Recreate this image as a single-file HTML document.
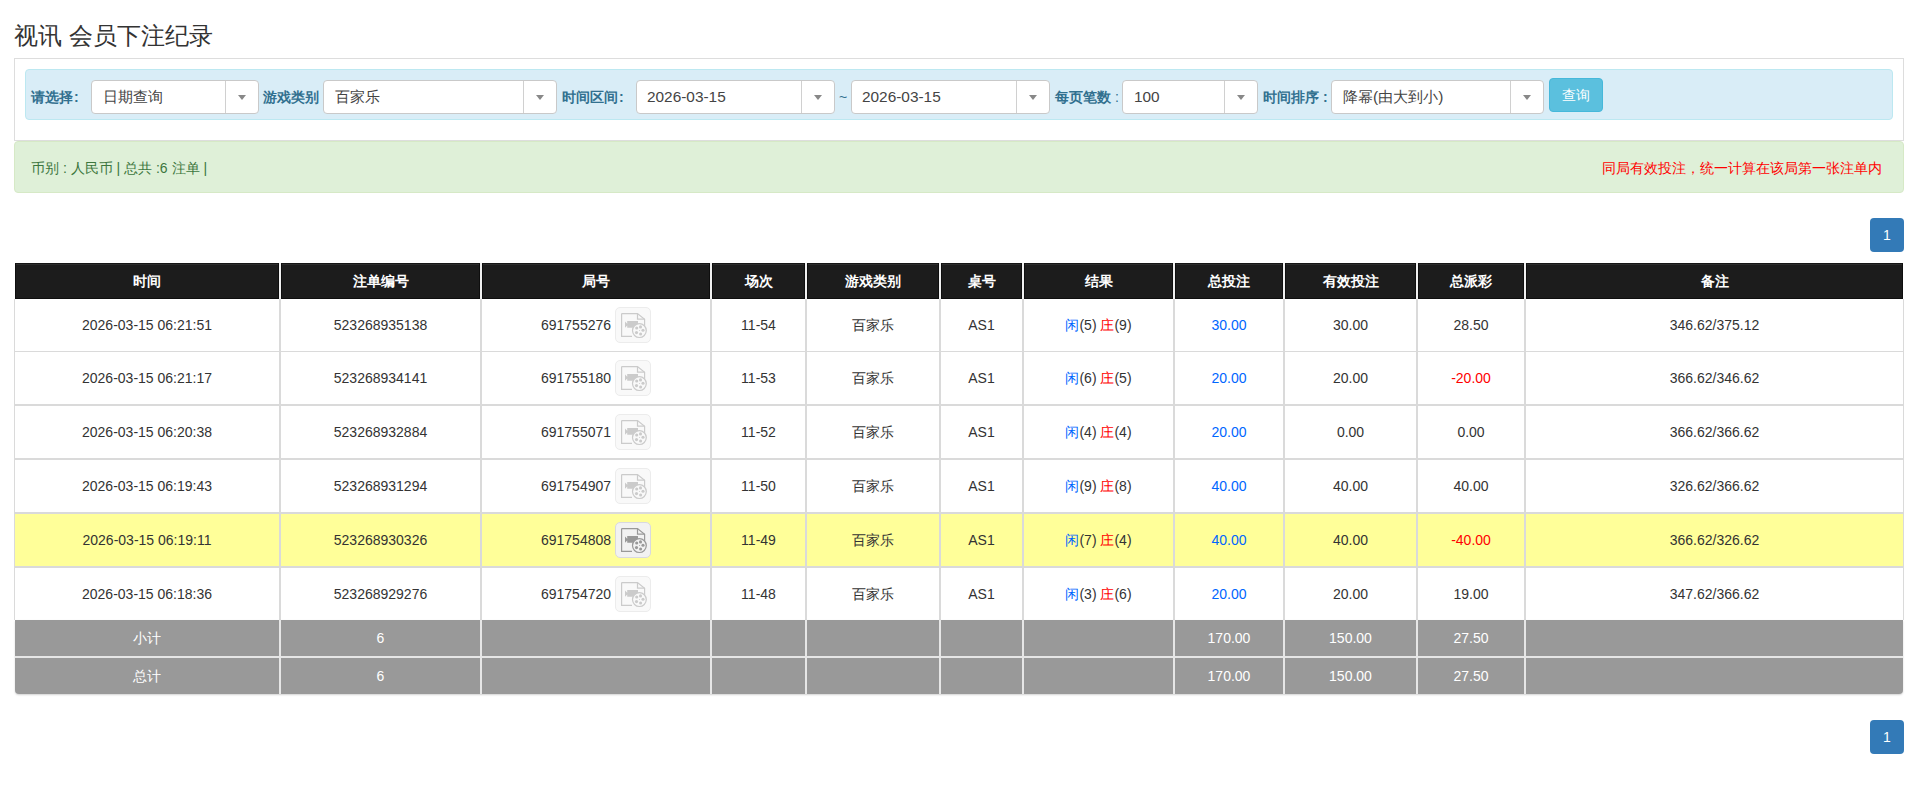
<!DOCTYPE html><html><head><meta charset="utf-8"><style>
*{box-sizing:border-box;margin:0;padding:0}
html,body{width:1917px;height:801px;overflow:hidden;background:#fff}
body{font-family:"Liberation Sans",sans-serif;color:#333;position:relative;font-size:14px}
.a{position:absolute}
.title{left:14px;top:21px;font-size:24px;line-height:30px;color:#333;white-space:nowrap}
.panel{left:14px;top:58px;width:1890px;height:83px;border:1px solid #ddd;background:#fff}
.info{left:25px;top:69px;width:1868px;height:51px;border:1px solid #bce8f1;background:#d9edf7;border-radius:4px}
.lbl{position:absolute;top:80px;height:34px;line-height:34px;font-weight:bold;color:#31708f;font-size:14px;white-space:nowrap}
.sel{position:absolute;top:80px;height:34px;border:1px solid #c9c9c9;border-radius:4px;background:#fff}
.st{position:absolute;top:0;line-height:32px;font-size:15.4px;color:#444;white-space:nowrap}
.dv{position:absolute;top:0;width:1px;height:32px;background:#d0d0d0}
.ar{position:absolute;top:14px;width:0;height:0;border-style:solid;border-width:5px 4px 0 4px;border-color:#888 transparent transparent transparent}
.btn{left:1549px;top:78px;width:54px;height:34px;background:#5bc0de;border:1px solid #46b8da;border-radius:4px;color:#fff;text-align:center;line-height:32px;font-size:14px}
.alert{left:14px;top:141px;width:1890px;height:52px;background:#dff0d8;border:1px solid #d6e9c6;border-radius:4px}
.at{position:absolute;top:142px;height:52px;line-height:52px;font-size:14px;white-space:nowrap}
.pg{left:1870px;width:34px;height:34px;background:#337ab7;border-radius:4px;color:#fff;text-align:center;line-height:34px;font-size:14px;font-weight:normal}
.th{position:absolute;top:263px;height:36px;background:#1c1c1c;border:1px solid #0e0e0e;border-top-color:#151515;color:#fff;font-weight:bold;text-align:center;line-height:34px;font-size:14px;box-shadow:inset 0 1px 0 #2c2c2c}
.td{position:absolute;text-align:center;font-size:14px;line-height:20px;color:#333;white-space:nowrap;display:flex;align-items:center;justify-content:center}
.hl{position:absolute;background:#dadada}
.vb{position:absolute;width:36px;height:36px;border:1px solid #ececec;border-radius:5px;background:#f9f9f9;margin-left:4px}
.vb.act{border-color:#d9d9e0;background:#f2f2f2}
.vb svg{position:absolute;left:-1px;top:-1px}
.ft{position:absolute;background:#999;color:#fff;text-align:center;font-size:14px;line-height:20px;display:flex;align-items:center;justify-content:center}
.b{color:#06f}.r{color:#f00}
</style></head><body>
<div class="a title">视讯 会员下注纪录</div>
<div class="a panel"></div><div class="a info"></div>
<div class="lbl" style="left:31px">请选择<span style="margin-left:1px">:</span></div>
<div class="sel" style="left:91px;width:168px"><span class="st" style="left:11px">日期查询</span><i class="dv" style="left:133px"></i><b class="ar" style="left:146px"></b></div>
<div class="lbl" style="left:263px">游戏类别</div>
<div class="sel" style="left:323px;width:234px"><span class="st" style="left:11px">百家乐</span><i class="dv" style="left:199px"></i><b class="ar" style="left:212px"></b></div>
<div class="lbl" style="left:562px">时间区间<span style="margin-left:1px">:</span></div>
<div class="sel" style="left:636px;width:199px"><span class="st" style="left:10px">2026-03-15</span><i class="dv" style="left:164px"></i><b class="ar" style="left:177px"></b></div>
<div class="lbl" style="left:839px;font-weight:normal">~</div>
<div class="sel" style="left:851px;width:199px"><span class="st" style="left:10px">2026-03-15</span><i class="dv" style="left:164px"></i><b class="ar" style="left:177px"></b></div>
<div class="lbl" style="left:1055px">每页笔数<span style="font-weight:normal"> :</span></div>
<div class="sel" style="left:1122px;width:136px"><span class="st" style="left:11px">100</span><i class="dv" style="left:101px"></i><b class="ar" style="left:114px"></b></div>
<div class="lbl" style="left:1263px">时间排序 :</div>
<div class="sel" style="left:1331px;width:213px"><span class="st" style="left:11px">降幂(由大到小)</span><i class="dv" style="left:178px"></i><b class="ar" style="left:191px"></b></div>
<div class="a btn">查询</div>
<div class="a alert"></div>
<div class="at" style="left:31px;color:#3c763d">币别 : 人民币 | 总共 :6 注单 |</div>
<div class="at" style="right:35px;color:#f00">同局有效投注，统一计算在该局第一张注单内</div>
<div class="a pg" style="top:218px">1</div>
<div class="a pg" style="top:720px">1</div>
<div class="a" style="left:15px;top:263px;width:1888px;height:36px;background:#f0f0f0"></div>
<div class="th" style="left:15px;width:264px">时间</div>
<div class="th" style="left:281px;width:199px">注单编号</div>
<div class="th" style="left:482px;width:228px">局号</div>
<div class="th" style="left:712px;width:93px">场次</div>
<div class="th" style="left:807px;width:132px">游戏类别</div>
<div class="th" style="left:941px;width:81px">桌号</div>
<div class="th" style="left:1024px;width:149px">结果</div>
<div class="th" style="left:1175px;width:108px">总投注</div>
<div class="th" style="left:1285px;width:131px">有效投注</div>
<div class="th" style="left:1418px;width:106px">总派彩</div>
<div class="th" style="left:1526px;width:377px">备注</div>
<div class="a" style="left:15px;top:514px;width:1888px;height:52px;background:#ffff99"></div>
<div class="hl" style="left:14px;top:299px;width:1px;height:321px"></div>
<div class="hl" style="left:1903px;top:299px;width:1px;height:321px"></div>
<div class="hl" style="left:14px;top:351px;width:1890px;height:1px"></div>
<div class="hl" style="left:14px;top:404px;width:1890px;height:2px"></div>
<div class="hl" style="left:14px;top:458px;width:1890px;height:2px"></div>
<div class="hl" style="left:14px;top:512px;width:1890px;height:2px"></div>
<div class="hl" style="left:14px;top:566px;width:1890px;height:2px"></div>
<div class="hl" style="left:279px;top:299px;width:2px;height:321px"></div>
<div class="hl" style="left:480px;top:299px;width:2px;height:321px"></div>
<div class="hl" style="left:710px;top:299px;width:2px;height:321px"></div>
<div class="hl" style="left:805px;top:299px;width:2px;height:321px"></div>
<div class="hl" style="left:939px;top:299px;width:2px;height:321px"></div>
<div class="hl" style="left:1022px;top:299px;width:2px;height:321px"></div>
<div class="hl" style="left:1173px;top:299px;width:2px;height:321px"></div>
<div class="hl" style="left:1283px;top:299px;width:2px;height:321px"></div>
<div class="hl" style="left:1416px;top:299px;width:2px;height:321px"></div>
<div class="hl" style="left:1524px;top:299px;width:2px;height:321px"></div>
<div class="td" style="left:15px;top:299px;width:264px;height:52px">2026-03-15 06:21:51</div>
<div class="td" style="left:281px;top:299px;width:199px;height:52px">523268935138</div>
<div class="td" style="left:482px;top:299px;width:228px;height:52px">691755276<span class="vb" style="position:relative;display:inline-block"><svg width="36" height="36" viewBox="0 0 36 36"><g fill="none" stroke="#cbcbcb" stroke-width="1.2"><path d="M6.6 6.6H22.5L29.6 12.2V22"/><path d="M6.6 6.6V29.4H17"/><path d="M22.5 6.6V12.2H29.6"/></g><path d="M10 14.5l2.2 2.3V14h10.8v6.8h-10.8v-2.4L10 20.7z" fill="#cbcbcb"/><circle cx="24.4" cy="23.6" r="6.9" fill="#f9f9f9" stroke="#cbcbcb" stroke-width="1.2"/><g fill="#cbcbcb"><circle cx="21.7" cy="21" r="1.55"/><circle cx="25.5" cy="19.9" r="1.55"/><circle cx="28" cy="23.3" r="1.55"/><circle cx="25.6" cy="27" r="1.55"/><circle cx="21.5" cy="25.6" r="1.55"/><circle cx="24.6" cy="23.4" r="0.5"/></g></svg></span></div>
<div class="td" style="left:712px;top:299px;width:93px;height:52px">11-54</div>
<div class="td" style="left:807px;top:299px;width:132px;height:52px">百家乐</div>
<div class="td" style="left:941px;top:299px;width:81px;height:52px">AS1</div>
<div class="td" style="left:1024px;top:299px;width:149px;height:52px"><span><span class="b">闲</span>(5) <span class="r">庄</span>(9)</span></div>
<div class="td" style="left:1175px;top:299px;width:108px;height:52px"><span class="b">30.00</span></div>
<div class="td" style="left:1285px;top:299px;width:131px;height:52px">30.00</div>
<div class="td" style="left:1418px;top:299px;width:106px;height:52px">28.50</div>
<div class="td" style="left:1526px;top:299px;width:377px;height:52px">346.62/375.12</div>
<div class="td" style="left:15px;top:352px;width:264px;height:52px">2026-03-15 06:21:17</div>
<div class="td" style="left:281px;top:352px;width:199px;height:52px">523268934141</div>
<div class="td" style="left:482px;top:352px;width:228px;height:52px">691755180<span class="vb" style="position:relative;display:inline-block"><svg width="36" height="36" viewBox="0 0 36 36"><g fill="none" stroke="#cbcbcb" stroke-width="1.2"><path d="M6.6 6.6H22.5L29.6 12.2V22"/><path d="M6.6 6.6V29.4H17"/><path d="M22.5 6.6V12.2H29.6"/></g><path d="M10 14.5l2.2 2.3V14h10.8v6.8h-10.8v-2.4L10 20.7z" fill="#cbcbcb"/><circle cx="24.4" cy="23.6" r="6.9" fill="#f9f9f9" stroke="#cbcbcb" stroke-width="1.2"/><g fill="#cbcbcb"><circle cx="21.7" cy="21" r="1.55"/><circle cx="25.5" cy="19.9" r="1.55"/><circle cx="28" cy="23.3" r="1.55"/><circle cx="25.6" cy="27" r="1.55"/><circle cx="21.5" cy="25.6" r="1.55"/><circle cx="24.6" cy="23.4" r="0.5"/></g></svg></span></div>
<div class="td" style="left:712px;top:352px;width:93px;height:52px">11-53</div>
<div class="td" style="left:807px;top:352px;width:132px;height:52px">百家乐</div>
<div class="td" style="left:941px;top:352px;width:81px;height:52px">AS1</div>
<div class="td" style="left:1024px;top:352px;width:149px;height:52px"><span><span class="b">闲</span>(6) <span class="r">庄</span>(5)</span></div>
<div class="td" style="left:1175px;top:352px;width:108px;height:52px"><span class="b">20.00</span></div>
<div class="td" style="left:1285px;top:352px;width:131px;height:52px">20.00</div>
<div class="td" style="left:1418px;top:352px;width:106px;height:52px"><span class="r">-20.00</span></div>
<div class="td" style="left:1526px;top:352px;width:377px;height:52px">366.62/346.62</div>
<div class="td" style="left:15px;top:406px;width:264px;height:52px">2026-03-15 06:20:38</div>
<div class="td" style="left:281px;top:406px;width:199px;height:52px">523268932884</div>
<div class="td" style="left:482px;top:406px;width:228px;height:52px">691755071<span class="vb" style="position:relative;display:inline-block"><svg width="36" height="36" viewBox="0 0 36 36"><g fill="none" stroke="#cbcbcb" stroke-width="1.2"><path d="M6.6 6.6H22.5L29.6 12.2V22"/><path d="M6.6 6.6V29.4H17"/><path d="M22.5 6.6V12.2H29.6"/></g><path d="M10 14.5l2.2 2.3V14h10.8v6.8h-10.8v-2.4L10 20.7z" fill="#cbcbcb"/><circle cx="24.4" cy="23.6" r="6.9" fill="#f9f9f9" stroke="#cbcbcb" stroke-width="1.2"/><g fill="#cbcbcb"><circle cx="21.7" cy="21" r="1.55"/><circle cx="25.5" cy="19.9" r="1.55"/><circle cx="28" cy="23.3" r="1.55"/><circle cx="25.6" cy="27" r="1.55"/><circle cx="21.5" cy="25.6" r="1.55"/><circle cx="24.6" cy="23.4" r="0.5"/></g></svg></span></div>
<div class="td" style="left:712px;top:406px;width:93px;height:52px">11-52</div>
<div class="td" style="left:807px;top:406px;width:132px;height:52px">百家乐</div>
<div class="td" style="left:941px;top:406px;width:81px;height:52px">AS1</div>
<div class="td" style="left:1024px;top:406px;width:149px;height:52px"><span><span class="b">闲</span>(4) <span class="r">庄</span>(4)</span></div>
<div class="td" style="left:1175px;top:406px;width:108px;height:52px"><span class="b">20.00</span></div>
<div class="td" style="left:1285px;top:406px;width:131px;height:52px">0.00</div>
<div class="td" style="left:1418px;top:406px;width:106px;height:52px">0.00</div>
<div class="td" style="left:1526px;top:406px;width:377px;height:52px">366.62/366.62</div>
<div class="td" style="left:15px;top:460px;width:264px;height:52px">2026-03-15 06:19:43</div>
<div class="td" style="left:281px;top:460px;width:199px;height:52px">523268931294</div>
<div class="td" style="left:482px;top:460px;width:228px;height:52px">691754907<span class="vb" style="position:relative;display:inline-block"><svg width="36" height="36" viewBox="0 0 36 36"><g fill="none" stroke="#cbcbcb" stroke-width="1.2"><path d="M6.6 6.6H22.5L29.6 12.2V22"/><path d="M6.6 6.6V29.4H17"/><path d="M22.5 6.6V12.2H29.6"/></g><path d="M10 14.5l2.2 2.3V14h10.8v6.8h-10.8v-2.4L10 20.7z" fill="#cbcbcb"/><circle cx="24.4" cy="23.6" r="6.9" fill="#f9f9f9" stroke="#cbcbcb" stroke-width="1.2"/><g fill="#cbcbcb"><circle cx="21.7" cy="21" r="1.55"/><circle cx="25.5" cy="19.9" r="1.55"/><circle cx="28" cy="23.3" r="1.55"/><circle cx="25.6" cy="27" r="1.55"/><circle cx="21.5" cy="25.6" r="1.55"/><circle cx="24.6" cy="23.4" r="0.5"/></g></svg></span></div>
<div class="td" style="left:712px;top:460px;width:93px;height:52px">11-50</div>
<div class="td" style="left:807px;top:460px;width:132px;height:52px">百家乐</div>
<div class="td" style="left:941px;top:460px;width:81px;height:52px">AS1</div>
<div class="td" style="left:1024px;top:460px;width:149px;height:52px"><span><span class="b">闲</span>(9) <span class="r">庄</span>(8)</span></div>
<div class="td" style="left:1175px;top:460px;width:108px;height:52px"><span class="b">40.00</span></div>
<div class="td" style="left:1285px;top:460px;width:131px;height:52px">40.00</div>
<div class="td" style="left:1418px;top:460px;width:106px;height:52px">40.00</div>
<div class="td" style="left:1526px;top:460px;width:377px;height:52px">326.62/366.62</div>
<div class="td" style="left:15px;top:514px;width:264px;height:52px">2026-03-15 06:19:11</div>
<div class="td" style="left:281px;top:514px;width:199px;height:52px">523268930326</div>
<div class="td" style="left:482px;top:514px;width:228px;height:52px">691754808<span class="vb act" style="position:relative;display:inline-block"><svg width="36" height="36" viewBox="0 0 36 36"><g fill="none" stroke="#999" stroke-width="1.2"><path d="M6.6 6.6H22.5L29.6 12.2V22"/><path d="M6.6 6.6V29.4H17"/><path d="M22.5 6.6V12.2H29.6"/></g><path d="M10 14.5l2.2 2.3V14h10.8v6.8h-10.8v-2.4L10 20.7z" fill="#999"/><circle cx="24.4" cy="23.6" r="6.9" fill="#f2f2f2" stroke="#999" stroke-width="1.2"/><g fill="#999"><circle cx="21.7" cy="21" r="1.55"/><circle cx="25.5" cy="19.9" r="1.55"/><circle cx="28" cy="23.3" r="1.55"/><circle cx="25.6" cy="27" r="1.55"/><circle cx="21.5" cy="25.6" r="1.55"/><circle cx="24.6" cy="23.4" r="0.5"/></g></svg></span></div>
<div class="td" style="left:712px;top:514px;width:93px;height:52px">11-49</div>
<div class="td" style="left:807px;top:514px;width:132px;height:52px">百家乐</div>
<div class="td" style="left:941px;top:514px;width:81px;height:52px">AS1</div>
<div class="td" style="left:1024px;top:514px;width:149px;height:52px"><span><span class="b">闲</span>(7) <span class="r">庄</span>(4)</span></div>
<div class="td" style="left:1175px;top:514px;width:108px;height:52px"><span class="b">40.00</span></div>
<div class="td" style="left:1285px;top:514px;width:131px;height:52px">40.00</div>
<div class="td" style="left:1418px;top:514px;width:106px;height:52px"><span class="r">-40.00</span></div>
<div class="td" style="left:1526px;top:514px;width:377px;height:52px">366.62/326.62</div>
<div class="td" style="left:15px;top:568px;width:264px;height:52px">2026-03-15 06:18:36</div>
<div class="td" style="left:281px;top:568px;width:199px;height:52px">523268929276</div>
<div class="td" style="left:482px;top:568px;width:228px;height:52px">691754720<span class="vb" style="position:relative;display:inline-block"><svg width="36" height="36" viewBox="0 0 36 36"><g fill="none" stroke="#cbcbcb" stroke-width="1.2"><path d="M6.6 6.6H22.5L29.6 12.2V22"/><path d="M6.6 6.6V29.4H17"/><path d="M22.5 6.6V12.2H29.6"/></g><path d="M10 14.5l2.2 2.3V14h10.8v6.8h-10.8v-2.4L10 20.7z" fill="#cbcbcb"/><circle cx="24.4" cy="23.6" r="6.9" fill="#f9f9f9" stroke="#cbcbcb" stroke-width="1.2"/><g fill="#cbcbcb"><circle cx="21.7" cy="21" r="1.55"/><circle cx="25.5" cy="19.9" r="1.55"/><circle cx="28" cy="23.3" r="1.55"/><circle cx="25.6" cy="27" r="1.55"/><circle cx="21.5" cy="25.6" r="1.55"/><circle cx="24.6" cy="23.4" r="0.5"/></g></svg></span></div>
<div class="td" style="left:712px;top:568px;width:93px;height:52px">11-48</div>
<div class="td" style="left:807px;top:568px;width:132px;height:52px">百家乐</div>
<div class="td" style="left:941px;top:568px;width:81px;height:52px">AS1</div>
<div class="td" style="left:1024px;top:568px;width:149px;height:52px"><span><span class="b">闲</span>(3) <span class="r">庄</span>(6)</span></div>
<div class="td" style="left:1175px;top:568px;width:108px;height:52px"><span class="b">20.00</span></div>
<div class="td" style="left:1285px;top:568px;width:131px;height:52px">20.00</div>
<div class="td" style="left:1418px;top:568px;width:106px;height:52px">19.00</div>
<div class="td" style="left:1526px;top:568px;width:377px;height:52px">347.62/366.62</div>
<div class="a" style="left:15px;top:620px;width:1888px;height:74px;background:#e6e6e6;border-radius:0 0 4px 4px;box-shadow:0 1px 2px rgba(0,0,0,.18)"></div>
<div class="ft" style="left:15px;top:620px;width:264px;height:36px;">小计</div>
<div class="ft" style="left:281px;top:620px;width:199px;height:36px;">6</div>
<div class="ft" style="left:482px;top:620px;width:228px;height:36px;"></div>
<div class="ft" style="left:712px;top:620px;width:93px;height:36px;"></div>
<div class="ft" style="left:807px;top:620px;width:132px;height:36px;"></div>
<div class="ft" style="left:941px;top:620px;width:81px;height:36px;"></div>
<div class="ft" style="left:1024px;top:620px;width:149px;height:36px;"></div>
<div class="ft" style="left:1175px;top:620px;width:108px;height:36px;">170.00</div>
<div class="ft" style="left:1285px;top:620px;width:131px;height:36px;">150.00</div>
<div class="ft" style="left:1418px;top:620px;width:106px;height:36px;">27.50</div>
<div class="ft" style="left:1526px;top:620px;width:377px;height:36px;"></div>
<div class="ft" style="left:15px;top:658px;width:264px;height:36px;border-bottom-left-radius:4px;">总计</div>
<div class="ft" style="left:281px;top:658px;width:199px;height:36px;">6</div>
<div class="ft" style="left:482px;top:658px;width:228px;height:36px;"></div>
<div class="ft" style="left:712px;top:658px;width:93px;height:36px;"></div>
<div class="ft" style="left:807px;top:658px;width:132px;height:36px;"></div>
<div class="ft" style="left:941px;top:658px;width:81px;height:36px;"></div>
<div class="ft" style="left:1024px;top:658px;width:149px;height:36px;"></div>
<div class="ft" style="left:1175px;top:658px;width:108px;height:36px;">170.00</div>
<div class="ft" style="left:1285px;top:658px;width:131px;height:36px;">150.00</div>
<div class="ft" style="left:1418px;top:658px;width:106px;height:36px;">27.50</div>
<div class="ft" style="left:1526px;top:658px;width:377px;height:36px;border-bottom-right-radius:4px;"></div>
</body></html>
